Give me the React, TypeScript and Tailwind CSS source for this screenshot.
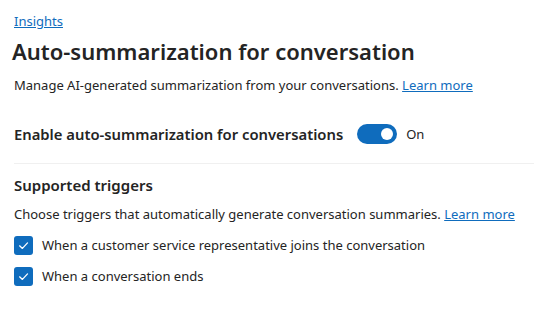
import React from "react";

function Check() {
  return (
    <span className="flex h-[19px] w-[19px] shrink-0 items-center justify-center rounded-[3px] bg-[#0f6cbd]">
      <svg width="13" height="13" viewBox="0 0 12 12" fill="none">
        <path d="M2.4 6.3 L5 8.7 L9.7 3.6" stroke="white" strokeWidth="1.2" strokeLinecap="round" strokeLinejoin="round" />
      </svg>
    </span>
  );
}

export default function App() {
  return (
    <div
      className="h-[314px] w-[534px] bg-white pl-[14px] pt-[8px] text-[#242424]"
      style={{ fontFamily: '"Noto Sans", "Open Sans", sans-serif' }}
    >
      <a className="text-[13px] leading-[18px] text-[#0f6cbd] underline">Insights</a>
      <h1 className="-ml-[2px] mt-[4px] text-[22px] font-semibold leading-[30px]">
        Auto-summarization for conversation
      </h1>
      <p className="mt-[9px] text-[13px] leading-[20px]">
        Manage AI-generated summarization from your conversations.{" "}
        <a className="text-[#0f6cbd] underline">Learn more</a>
      </p>
      <div className="mt-[28px] flex items-center">
        <span className="text-[14.8px] font-semibold leading-[22px]">
          Enable auto-summarization for conversations
        </span>
        <span className="ml-[14px] flex h-[20px] w-[40px] items-center justify-end rounded-full bg-[#0f6cbd] pr-[4px]">
          <span className="h-[12px] w-[12px] rounded-full bg-white" />
        </span>
        <span className="ml-[9px] text-[13px] leading-[20px]">On</span>
      </div>
      <div className="mt-[18px] h-px bg-[#f0f0f0]" />
      <h2 className="mt-[10px] text-[15px] font-semibold leading-[22px]">Supported triggers</h2>
      <p className="mt-[8px] text-[13px] leading-[20px]">
        Choose triggers that automatically generate conversation summaries.{" "}
        <a className="text-[#0f6cbd] underline">Learn more</a>
      </p>
      <div className="mt-[11px] flex flex-col gap-[11px]">
        <label className="flex items-center gap-[9px] text-[13px] leading-[20px]">
          <Check />
          When a customer service representative joins the conversation
        </label>
        <label className="flex items-center gap-[9px] text-[13px] leading-[20px]">
          <Check />
          When a conversation ends
        </label>
      </div>
    </div>
  );
}
